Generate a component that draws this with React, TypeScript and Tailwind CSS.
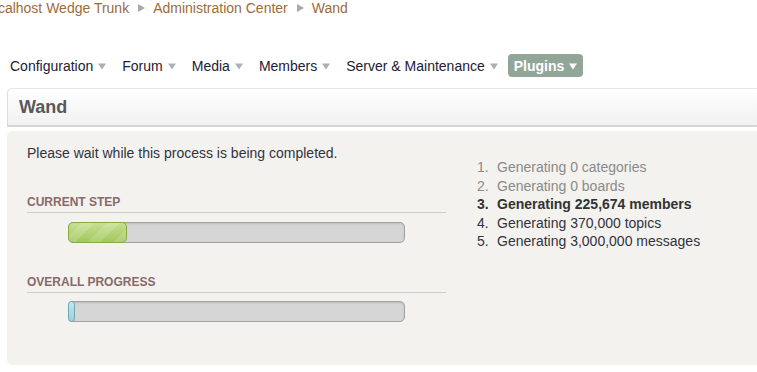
import React from 'react';

const crumbs = ['localhost Wedge Trunk', 'Administration Center', 'Wand'];

const menu = [
  { label: 'Configuration' },
  { label: 'Forum' },
  { label: 'Media' },
  { label: 'Members' },
  { label: 'Server & Maintenance' },
  { label: 'Plugins', active: true },
];

const steps = [
  { text: 'Generating 0 categories', state: 'done' },
  { text: 'Generating 0 boards', state: 'done' },
  { text: 'Generating 225,674 members', state: 'current' },
  { text: 'Generating 370,000 topics', state: 'todo' },
  { text: 'Generating 3,000,000 messages', state: 'todo' },
];

function DownArrow({ color }: { color: string }) {
  return (
    <svg width="8" height="7" viewBox="0 0 8 7" className="ml-[5px] mt-[2px]">
      <path d="M0 0.5 L8 0.5 L4 6.5 Z" fill={color} />
    </svg>
  );
}

function RightArrow() {
  return (
    <svg width="7" height="8" viewBox="0 0 7 8" className="ml-[9px] mr-[8px]">
      <path d="M0 0 L7 4 L0 8 Z" fill="#a9a9a9" />
    </svg>
  );
}

function ProgressBar({ percent, kind }: { percent: number; kind: 'green' | 'teal' }) {
  return (
    <div className="relative ml-[41px] h-[21px] w-[337px] rounded-[5px] border border-[#a2a2a2] bg-[#d5d5d5] shadow-[inset_0_1px_2px_rgba(0,0,0,0.12)]">
      {kind === 'green' ? (
        <div
          className="absolute -top-px -bottom-px -left-px overflow-hidden rounded-[5px] border border-[#86ad43] bg-[linear-gradient(to_bottom,#c6e092,#a2c75d)]"
          style={{ width: `${percent}%` }}
        >
          <div className="h-full w-full bg-[repeating-linear-gradient(-45deg,rgba(255,255,255,0.14)_0px,rgba(255,255,255,0.14)_9px,transparent_9px,transparent_18px)]" />
        </div>
      ) : (
        <div
          className="absolute -top-px -bottom-px -left-px rounded-[4px] border border-[#6ea7b2] bg-[linear-gradient(to_bottom,#c4e6ec,#9fd0d9)]"
          style={{ width: `${percent}%` }}
        />
      )}
    </div>
  );
}

export default function App() {
  return (
    <div className="h-[372px] w-[757px] overflow-hidden bg-white font-['Liberation_Sans',Arial,sans-serif]">
      {/* Breadcrumb */}
      <div className="-ml-[13px] flex h-[16px] items-center whitespace-nowrap text-[14px] leading-[16px] text-[#9c6b3c]">
        {crumbs.map((c, i) => (
          <React.Fragment key={c}>
            {i > 0 && <RightArrow />}
            <span>{c}</span>
          </React.Fragment>
        ))}
      </div>

      {/* Admin menu */}
      <div className="mt-[38px] flex gap-[4px] pl-[4px] text-[14px] leading-[20px]">
        {menu.map((m) => (
          <div
            key={m.label}
            className={`flex h-[23px] items-center whitespace-nowrap rounded-[4px] px-[6px] ${
              m.active ? 'bg-[#92a697] font-bold text-white' : 'text-[#1d2036]'
            }`}
          >
            <span>{m.label}</span>
            <DownArrow color={m.active ? '#ffffff' : '#aab0b8'} />
          </div>
        ))}
      </div>

      {/* Title bar */}
      <div className="mt-[11px] ml-[7px] w-[800px] rounded-tl-[5px] border-t border-l border-b-2 border-t-[#e6e6e6] border-l-[#dcdcdc] border-b-[#d6d6d6] bg-[linear-gradient(to_bottom,#ffffff,#f1f1f1)] pt-[6px] pb-[6px] pl-[11px]">
        <h3 className="text-[18px] font-bold leading-[24px] text-[#595959]">Wand</h3>
      </div>

      {/* Content panel */}
      <div className="mt-[4px] ml-[7px] flex h-[234px] w-[800px] rounded-[6px] bg-[#f3f2ee] pt-[13px] pl-[20px]">
        <div className="w-[419px]">
          <p className="text-[14px] leading-[18px] text-[#333340]">Please wait while this process is being completed.</p>

          <h3 className="mt-[32px] border-b border-[#cfcdcb] pb-[2px] text-[12px] font-bold leading-[16px] text-[#876a6a]">
            CURRENT STEP
          </h3>
          <div className="mt-[9px]">
            <ProgressBar percent={17.5} kind="green" />
          </div>

          <h3 className="mt-[31px] border-b border-[#cfcdcb] pb-[2px] text-[12px] font-bold leading-[16px] text-[#876a6a]">
            OVERALL PROGRESS
          </h3>
          <div className="mt-[8px]">
            <ProgressBar percent={2} kind="teal" />
          </div>
        </div>

        <ol className="ml-[31px] mt-[14px] text-[14px] leading-[18.5px]">
          {steps.map((s, i) => (
            <li
              key={s.text}
              className={`flex ${
                s.state === 'done'
                  ? 'text-[#8a8a8a]'
                  : s.state === 'current'
                  ? 'font-bold text-[#333333]'
                  : 'text-[#333340]'
              }`}
            >
              <span className="w-[20px]">{i + 1}.</span>
              <span>{s.text}</span>
            </li>
          ))}
        </ol>
      </div>
    </div>
  );
}
